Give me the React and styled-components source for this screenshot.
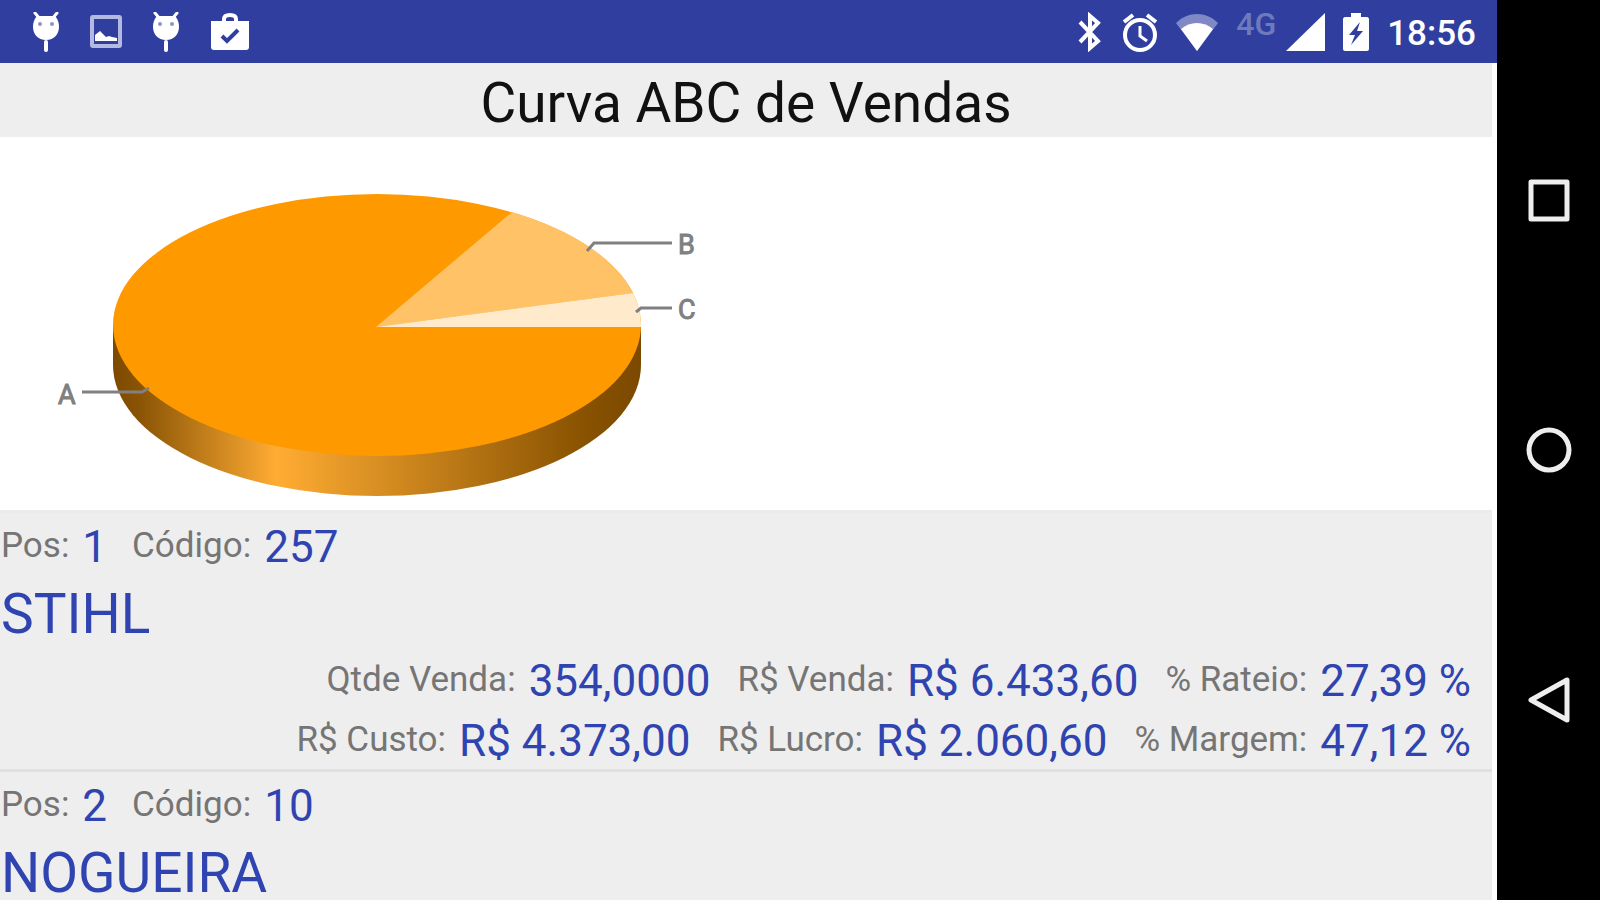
import React from "react";
import styled, { createGlobalStyle, css } from "styled-components";

const GlobalStyle = createGlobalStyle`
    * {
        box-sizing: border-box;
    }
    body {
        margin: 0;
        background-color: #000;
        font-family: Roboto, "Noto Sans", sans-serif;
    }
`;

const Device = styled.div`
    display: flex;
    height: 100vh;
    overflow: hidden;
`;

const Screen = styled.div`
    flex: 1;
    min-width: 0;
    display: flex;
    flex-direction: column;
    background-color: #fff;
`;

const StatusBar = styled.header`
    flex: none;
    height: 63px;
    padding: 0 21px 0 32px;
    display: flex;
    justify-content: space-between;
    align-items: center;
    background-color: #303f9f;
    color: #fff;
    svg {
        display: block;
    }
`;

const IconGroup = styled.div`
    display: flex;
    align-items: center;
    gap: ${({ $gap }) => $gap}px;
`;

const Network = styled.span`
    align-self: flex-start;
    margin-right: -8px;
    font-size: 32px;
    line-height: 30px;
    font-weight: 500;
    color: #6f7abd;
`;

const Clock = styled.time`
    font-size: 35px;
    line-height: 42px;
    font-weight: 500;
    padding-top: 4px;
`;

const Page = styled.main`
    flex: 1;
    min-height: 0;
    margin-right: 5px;
    display: flex;
    flex-direction: column;
`;

const Title = styled.h1`
    flex: none;
    margin: 0;
    padding-top: 6px;
    font-size: 55px;
    line-height: 68px;
    font-weight: 400;
    text-align: center;
    color: #111;
    background-color: #eee;
`;

const ChartArea = styled.section`
    flex: none;
    height: 373px;
    overflow: hidden;
    background-color: #fff;
    svg {
        display: block;
    }
    text {
        font-size: 27px;
        fill: #808080;
        stroke: #808080;
        stroke-width: 1;
    }
`;

const List = styled.ul`
    flex: 1;
    min-height: 0;
    margin: 0;
    padding: 0;
    list-style: none;
    overflow: hidden;
    background-color: #eee;
`;

const Item = styled.li`
    padding-top: 2px;
    border-top: 3px solid ${({ $first }) => ($first ? "#ebebeb" : "#e0e0e0")};
`;

const FieldRow = styled.div`
    display: flex;
    align-items: center;
    gap: 25px;
    height: 59px;
    padding: 0 21px 0 1px;
    white-space: nowrap;
    ${({ $end }) => $end && css`
        gap: 27px;
        height: 60px;
        justify-content: flex-end;
    `}
`;

const FieldBox = styled.div`
    display: flex;
    align-items: center;
    gap: 13px;
`;

const Label = styled.span`
    font-size: 35px;
    line-height: 56px;
    padding-top: 2px;
    color: #757575;
`;

const Value = styled.span`
    font-size: 44px;
    line-height: 60px;
    padding-top: 4px;
    color: #2f44b0;
`;

const Name = styled.h2`
    margin: 0;
    padding: 14px 0 9px 1px;
    font-size: 55px;
    line-height: 52px;
    font-weight: 400;
    color: #2f44b0;
`;

const NavBar = styled.nav`
    flex: none;
    width: 103px;
    padding: 75px 0;
    display: flex;
    flex-direction: column;
    background-color: #000;
`;

const NavButton = styled.button`
    flex: 1;
    display: flex;
    justify-content: center;
    align-items: center;
    padding: 0;
    border: 0;
    background: none;
    cursor: pointer;
    svg {
        fill: none;
        stroke: #eee;
        stroke-width: 5;
        stroke-linejoin: round;
    }
`;

const brands = [
    {
        pos: "1",
        code: "257",
        name: "STIHL",
        rows: [
            [["Qtde Venda:", "354,0000"], ["R$ Venda:", "R$ 6.433,60"], ["% Rateio:", "27,39 %"]],
            [["R$ Custo:", "R$ 4.373,00"], ["R$ Lucro:", "R$ 2.060,60"], ["% Margem:", "47,12 %"]],
        ],
    },
    { pos: "2", code: "10", name: "NOGUEIRA", rows: [] },
];

function DebugIcon() {
    return (
        <svg width="28" height="40" viewBox="0 0 28 40" fill="#fff">
            <path d="M3 1l5 6M25 1l-5 6" stroke="#fff" strokeWidth="3" strokeLinecap="round" />
            <path d="M5 4h18c3 3 4 7 4 11 0 7-5 13-13 13S1 22 1 15C1 11 2 7 5 4z" />
            <rect x="12" y="28" width="4" height="12" rx="2" />
            <circle cx="8" cy="12" r="2" fill="#8c94c9" />
            <circle cx="20" cy="12" r="2" fill="#8c94c9" />
        </svg>
    );
}

function PictureIcon() {
    return (
        <svg width="32" height="33" viewBox="0 0 32 33">
            <rect x="2" y="2" width="28" height="29" rx="1" fill="none" stroke="#b4badf" strokeWidth="4" />
            <path d="M5 26v-6l5-4 6 6 3-1 3 1 5 1v3z" fill="#fff" />
        </svg>
    );
}

function BagIcon() {
    return (
        <svg width="40" height="38" viewBox="0 0 40 38">
            <path d="M14 9V6c0-3 2-4 6-4s6 1 6 4v3" fill="none" stroke="#fff" strokeWidth="4" />
            <path d="M1 8h38v26c0 2-1 3-3 3H4c-2 0-3-1-3-3z" fill="#fff" />
            <path d="M12 23l5 5 11-11" fill="none" stroke="#303f9f" strokeWidth="4" />
        </svg>
    );
}

function BluetoothIcon() {
    return (
        <svg width="26" height="40" viewBox="0 0 26 40">
            <path d="M2 10l18 19-8 7V4l8 7L2 30" fill="none" stroke="#fff" strokeWidth="4" />
        </svg>
    );
}

function AlarmIcon() {
    return (
        <svg width="36" height="40" viewBox="0 0 36 40" fill="none" stroke="#fff" strokeWidth="4">
            <circle cx="18" cy="23" r="15" />
            <path d="M2 10l9-7M34 10l-9-7" />
            <path d="M18 14v10l7 5" strokeWidth="3" />
        </svg>
    );
}

function WifiIcon() {
    return (
        <svg width="42" height="38" viewBox="0 0 42 38">
            <path d="M21 38L0 10C12-2 30-2 42 10z" fill="#7f89c5" />
            <path d="M21 38L5 16c9-8 23-8 32 0z" fill="#fff" />
        </svg>
    );
}

function SignalIcon() {
    return (
        <svg width="39" height="38" viewBox="0 0 39 38">
            <path d="M39 0v38H0z" fill="#fff" />
        </svg>
    );
}

function BatteryIcon() {
    return (
        <svg width="26" height="38" viewBox="0 0 26 38">
            <path d="M8 0h10v4h6c1 0 2 1 2 2v30c0 1-1 2-2 2H2c-1 0-2-1-2-2V6c0-1 1-2 2-2h6z" fill="#fff" />
            <path d="M17 9L6 22h6l-4 10 12-14h-6z" fill="#303f9f" />
        </svg>
    );
}

function PieChart() {
    return (
        <svg width="720" height="374" viewBox="0 0 720 374" role="img" aria-label="Curva ABC">
            <defs>
                <linearGradient id="side" x1="113" x2="641" y1="0" y2="0" gradientUnits="userSpaceOnUse">
                    <stop offset="0" stopColor="#7c4900" />
                    <stop offset="0.05" stopColor="#8a5405" />
                    <stop offset="0.31" stopColor="#ffac33" />
                    <stop offset="0.9" stopColor="#875100" />
                    <stop offset="1" stopColor="#7c4900" />
                </linearGradient>
            </defs>
            <path d="M113 188v40a264 131 0 0 0 528 0v-40z" fill="url(#side)" />
            <ellipse cx="377" cy="188" rx="264" ry="131" fill="#ff9900" />
            <path d="M376 190L512 75A264 132 0 0 1 633 156z" fill="#ffc266" />
            <path d="M376 190L633 156A264 132 0 0 1 641 190z" fill="#ffebcc" />
            <g fill="none" stroke="#808080" strokeWidth="3">
                <path d="M587 114l7-8h78" />
                <path d="M636 175l5-4h31" />
                <path d="M82 255h60l7-4" />
            </g>
            <text x="678" y="117">B</text>
            <text x="678" y="182">C</text>
            <text x="58" y="267">A</text>
        </svg>
    );
}

function Field({ label, value }) {
    return (
        <FieldBox>
            <Label>{label}</Label>
            <Value>{value}</Value>
        </FieldBox>
    );
}

function BrandItem({ pos, code, name, rows, first }) {
    return (
        <Item $first={first}>
            <FieldRow>
                <Field label="Pos:" value={pos} />
                <Field label="Código:" value={code} />
            </FieldRow>
            <Name>{name}</Name>
            {rows.map((fields, i) => (
                <FieldRow key={i} $end>
                    {fields.map(([label, value]) => (
                        <Field key={label} label={label} value={value} />
                    ))}
                </FieldRow>
            ))}
        </Item>
    );
}

function App() {
    return (
        <Device>
            <GlobalStyle />
            <Screen>
                <StatusBar>
                    <IconGroup $gap={30}>
                        <DebugIcon />
                        <PictureIcon />
                        <DebugIcon />
                        <BagIcon />
                    </IconGroup>
                    <IconGroup $gap={18}>
                        <BluetoothIcon />
                        <AlarmIcon />
                        <WifiIcon />
                        <Network>4G</Network>
                        <SignalIcon />
                        <BatteryIcon />
                        <Clock>18:56</Clock>
                    </IconGroup>
                </StatusBar>
                <Page>
                    <Title>Curva ABC de Vendas</Title>
                    <ChartArea>
                        <PieChart />
                    </ChartArea>
                    <List>
                        {brands.map((brand, i) => (
                            <BrandItem key={brand.code} {...brand} first={i === 0} />
                        ))}
                    </List>
                </Page>
            </Screen>
            <NavBar>
                <NavButton aria-label="Recentes">
                    <svg width="46" height="46" viewBox="0 0 46 46">
                        <rect x="5" y="5" width="36" height="37" />
                    </svg>
                </NavButton>
                <NavButton aria-label="Início">
                    <svg width="46" height="46" viewBox="0 0 46 46">
                        <circle cx="23" cy="23" r="20" />
                    </svg>
                </NavButton>
                <NavButton aria-label="Voltar">
                    <svg width="46" height="50" viewBox="0 0 46 50">
                        <path d="M41 5v40L5 25z" />
                    </svg>
                </NavButton>
            </NavBar>
        </Device>
    );
}

export default App;
